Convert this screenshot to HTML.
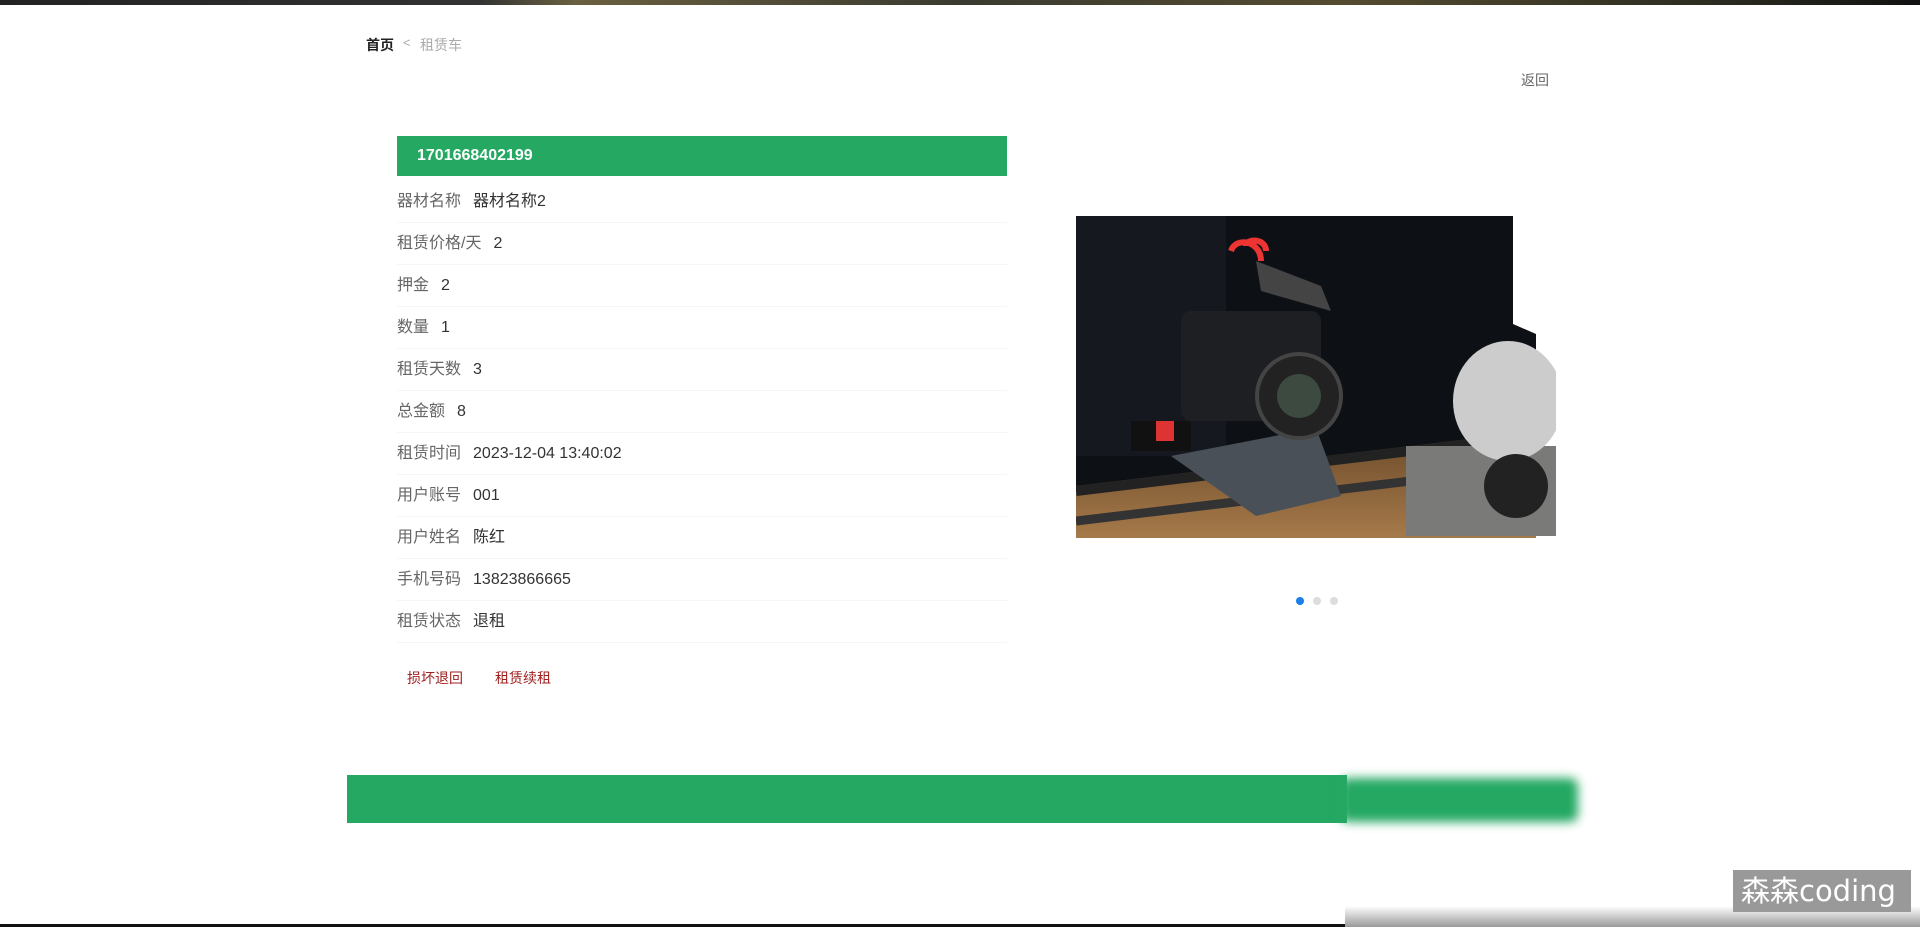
<!DOCTYPE html>
<html><head><meta charset="utf-8"><style>
*{margin:0;padding:0;box-sizing:border-box}
body{width:1920px;height:927px;overflow:hidden;background:#fff;position:relative;font-family:"Liberation Sans","Noto Sans CJK SC",sans-serif}
.abs{position:absolute}
.row{position:absolute;left:397px;width:610px;height:42px;font-size:16px;line-height:42px;border-bottom:1px solid #f2f6f6;color:#666;white-space:nowrap}
.row b{font-weight:normal;color:#333;margin-left:12px}
</style></head><body>
<div class="abs" style="left:0;top:0;width:1920px;height:5px;background:linear-gradient(90deg,#222,#333 25%,#6a6040 30%,#3a3a30 50%,#554c30 70%,#2a2a20 90%,#111)"></div>
<div class="abs" style="left:366px;top:35px;font-size:14px;color:#222;font-weight:bold">首页</div>
<div class="abs" style="left:403px;top:35px;font-size:13px;color:#aaa">&lt;</div>
<div class="abs" style="left:420px;top:35px;font-size:14px;color:#aaa">租赁车</div>
<div class="abs" style="left:1521px;top:70px;font-size:14px;color:#666">返回</div>
<div class="abs" style="left:397px;top:136px;width:610px;height:40px;background:#24a862;color:#fff;font-weight:bold;font-size:16px;line-height:40px;padding-left:20px">1701668402199</div>
<div class="row" style="top:181px">器材名称<b>器材名称2</b></div>
<div class="row" style="top:223px">租赁价格/天<b>2</b></div>
<div class="row" style="top:265px">押金<b>2</b></div>
<div class="row" style="top:307px">数量<b>1</b></div>
<div class="row" style="top:349px">租赁天数<b>3</b></div>
<div class="row" style="top:391px">总金额<b>8</b></div>
<div class="row" style="top:433px">租赁时间<b>2023-12-04 13:40:02</b></div>
<div class="row" style="top:475px">用户账号<b>001</b></div>
<div class="row" style="top:517px">用户姓名<b>陈红</b></div>
<div class="row" style="top:559px">手机号码<b>13823866665</b></div>
<div class="row" style="top:601px">租赁状态<b>退租</b></div>
<div class="abs" style="left:407px;top:668px;font-size:14px;color:#a02020">损坏退回</div>
<div class="abs" style="left:495px;top:668px;font-size:14px;color:#a02020">租赁续租</div>
<svg class="abs" style="left:1076px;top:216px" width="480" height="322" viewBox="0 0 480 322">
<defs><linearGradient id="w" x1="0" y1="0" x2="0" y2="1"><stop offset="0" stop-color="#6b4a2a"/><stop offset="1" stop-color="#a67a4a"/></linearGradient></defs>
<path d="M0 0H437V108L460 118V322H0Z" fill="#0d1116"/>
<rect x="0" y="0" width="150" height="240" fill="#1a1e24" opacity=".6"/>
<path d="M0 270L460 215V322H0Z" fill="url(#w)"/>
<path d="M0 275L460 220" stroke="#222" stroke-width="10"/>
<path d="M0 305L460 250" stroke="#333" stroke-width="9"/>
<path d="M95 240L240 212L265 280L180 300Z" fill="#4a5058"/>
<rect x="55" y="205" width="60" height="30" fill="#111"/><rect x="80" y="205" width="18" height="20" fill="#d33"/>
<rect x="105" y="95" width="140" height="110" rx="10" fill="#1d1f22"/>
<circle cx="223" cy="180" r="42" fill="#222" stroke="#444" stroke-width="4"/><circle cx="223" cy="180" r="22" fill="#3c4a40"/>
<path d="M180 45L245 70L255 95L185 75Z" fill="#444"/>
<path d="M155 35c5-15 30-10 30 10M170 30c0-8 20-8 20 5" stroke="#e33" stroke-width="6" fill="none"/>
<rect x="330" y="230" width="150" height="90" fill="#7a7a78"/>
<ellipse cx="432" cy="185" rx="55" ry="60" fill="#ccc"/>
<circle cx="440" cy="270" r="32" fill="#222"/>
</svg>
<div class="abs" style="left:1296px;top:597px;width:8px;height:8px;border-radius:50%;background:#1a7fe8"></div>
<div class="abs" style="left:1313px;top:597px;width:8px;height:8px;border-radius:50%;background:#ddd"></div>
<div class="abs" style="left:1330px;top:597px;width:8px;height:8px;border-radius:50%;background:#ddd"></div>
<div class="abs" style="left:347px;top:775px;width:1000px;height:48px;background:#24a862"></div>
<div class="abs" style="left:1340px;top:778px;width:238px;height:44px;background:#24a862;filter:blur(5px);border-radius:8px"></div>
<div class="abs" style="left:1345px;top:906px;width:575px;height:21px;background:linear-gradient(#fff,#9a9a9a)"></div>
<div class="abs" style="left:0;top:924px;width:1345px;height:3px;background:#111"></div>
<div class="abs" style="left:1733px;top:870px;width:178px;height:42px;background:#999;color:#fff;font-size:29px;line-height:42px;padding-left:8px;font-family:'DejaVu Sans','Noto Sans CJK SC',sans-serif">森森coding</div>
</body></html>
